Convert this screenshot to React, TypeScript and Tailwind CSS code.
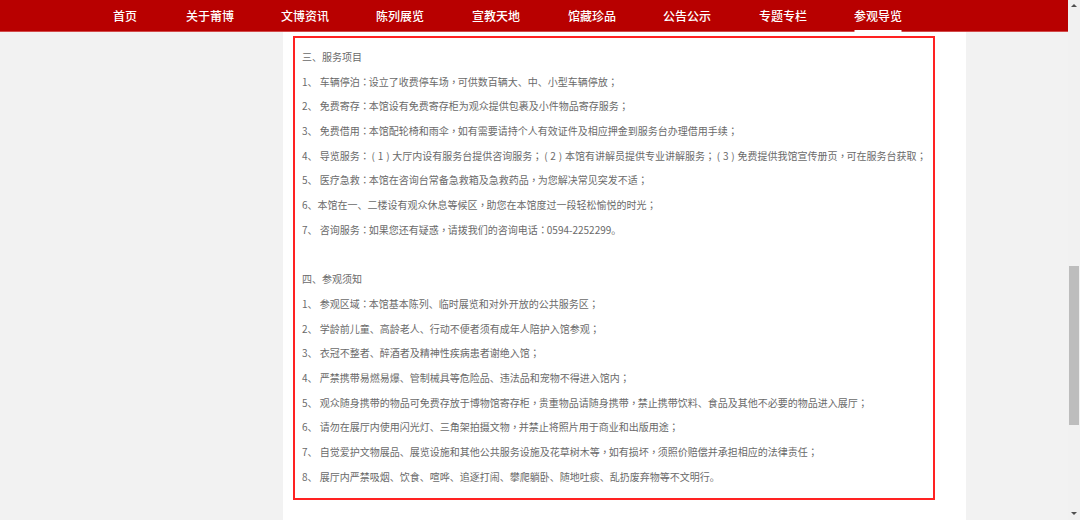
const navItems = ['首页', '关于莆博', '文博资讯', '陈列展览', '宣教天地', '馆藏珍品', '公告公示', '专题专栏', '参观导览']

const navLeft = [125, 210, 305, 400, 496, 592, 687, 783, 878]

const lines = [
  '三、服务项目',
  '1、 车辆停泊：设立了收费停车场，可供数百辆大、中、小型车辆停放；',
  '2、 免费寄存：本馆设有免费寄存柜为观众提供包裹及小件物品寄存服务；',
  '3、 免费借用：本馆配轮椅和雨伞，如有需要请持个人有效证件及相应押金到服务台办理借用手续；',
  '4、 导览服务：（1）大厅内设有服务台提供咨询服务；（2）本馆有讲解员提供专业讲解服务；（3）免费提供我馆宣传册页，可在服务台获取；',
  '5、 医疗急救：本馆在咨询台常备急救箱及急救药品，为您解决常见突发不适；',
  '6、本馆在一、二楼设有观众休息等候区，助您在本馆度过一段轻松愉悦的时光；',
  '7、 咨询服务：如果您还有疑惑，请拨我们的咨询电话：0594-2252299。',
  '',
  '四、参观须知',
  '1、 参观区域：本馆基本陈列、临时展览和对外开放的公共服务区；',
  '2、 学龄前儿童、高龄老人、行动不便者须有成年人陪护入馆参观；',
  '3、 衣冠不整者、醉酒者及精神性疾病患者谢绝入馆；',
  '4、 严禁携带易燃易爆、管制械具等危险品、违法品和宠物不得进入馆内；',
  '5、 观众随身携带的物品可免费存放于博物馆寄存柜，贵重物品请随身携带，禁止携带饮料、食品及其他不必要的物品进入展厅；',
  '6、 请勿在展厅内使用闪光灯、三角架拍摄文物，并禁止将照片用于商业和出版用途；',
  '7、 自觉爱护文物展品、展览设施和其他公共服务设施及花草树木等，如有损坏，须照价赔偿并承担相应的法律责任；',
  '8、 展厅内严禁吸烟、饮食、喧哗、追逐打闹、攀爬躺卧、随地吐痰、乱扔废弃物等不文明行。',
]

// centred full-width punctuation, as in the original page's font
function Line({ text }: { text: string }) {
  const parts = text.split(/([：；，（）])/)
  return (
    <>
      {parts.map((part, i) =>
        /^[：；，（）]$/.test(part) ? (
          <span key={i} className="inline-block w-[9px] text-center" style={{ fontFamily: '"Noto Sans CJK TC", sans-serif' }}>
            {part === '（' ? '(' : part === '）' ? ')' : part}
          </span>
        ) : (
          <span key={i}>{part}</span>
        ),
      )}
    </>
  )
}

function NavBar() {
  return (
    <div className="relative h-[32px] bg-[#b80000] border-b border-[#d24a4a]">
      {navItems.map((item, i) => (
        <div
          key={item}
          className="absolute top-0 h-[31px] flex items-center justify-center -translate-x-1/2"
          style={{ left: navLeft[i] }}
        >
          <span className="text-[12px] text-white font-medium">{item}</span>
          {i === navItems.length - 1 && (
            <div className="absolute left-1/2 -translate-x-1/2 bottom-[-1px] w-[47px] h-[2px] bg-white" />
          )}
        </div>
      ))}
    </div>
  )
}

function Scrollbar() {
  return (
    <div className="w-[12px] h-full bg-[#f1f1f1] flex flex-col items-center">
      <div className="mt-[4px] w-0 h-0 border-l-[3px] border-r-[3px] border-b-[3px] border-l-transparent border-r-transparent border-b-[#505050]" />
      <div className="mt-[259px] w-[10px] h-[159px] bg-[#bdbdbd]" />
      <div className="mt-auto mb-[5px] w-0 h-0 border-l-[3px] border-r-[3px] border-t-[3px] border-l-transparent border-r-transparent border-t-[#505050]" />
    </div>
  )
}

export default function App() {
  return (
    <div
      className="w-[1080px] h-[520px] overflow-hidden flex bg-[#f2f2f2]"
      style={{ fontFamily: '"Noto Sans CJK SC", "Noto Sans", sans-serif' }}
    >
      <div className="flex-1 flex flex-col">
        <NavBar />
        <div className="flex-1 flex">
          <div className="w-[283px]" />
          <div className="w-[683px] bg-white pl-[10px] pt-[4px]">
            <div className="w-[642px] border-2 border-[#ff2222] pt-[7px] pb-[9px] pl-[7px]">
              {lines.map((line, i) => (
                <p key={i} className="text-[10px] leading-[24.7px] h-[24.7px] text-[#6a6a6a] whitespace-pre">
                  <Line text={line} />
                </p>
              ))}
            </div>
          </div>
        </div>
      </div>
      <Scrollbar />
    </div>
  )
}
